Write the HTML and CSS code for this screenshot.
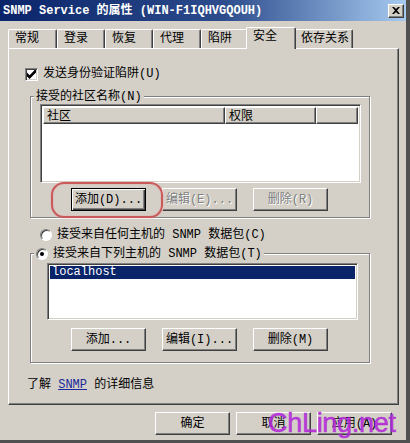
FILE: index.html
```html
<!DOCTYPE html>
<html lang="zh-CN">
<head>
  <meta charset="UTF-8">
  <title>SNMP Service 的属性</title>
  <link rel="stylesheet" href="styles.css">
</head>
<body>

  <div class="window">
    <!-- Title bar -->
    <div class="titlebar">
      <span class="title">SNMP Service 的属性 (WIN-F1IQHVGQOUH)</span>
      <span class="close">
        <svg width="8" height="7" viewBox="0 0 8 7"><path d="M0 0h2l2 2 2-2h2L5 3.5 8 7H6L4 5 2 7H0l3-3.5z" fill="#000"/></svg>
      </span>
    </div>

    <!-- Tabs -->
    <div class="tabs">
      <div class="tab t1">常规</div>
      <div class="tab t2">登录</div>
      <div class="tab t3">恢复</div>
      <div class="tab t4">代理</div>
      <div class="tab t5">陷阱</div>
      <div class="tab active">安全</div>
      <div class="tab t7">依存关系</div>
    </div>

    <div class="panel">
      <div class="check-row">
        <span class="checkbox">
          <svg width="9" height="9" viewBox="0 0 7 7"><path d="M0 2v3l2 2 5-5V-1L2 4z" fill="#000"/></svg>
        </span>
        <span>发送身份验证陷阱(U)</span>
      </div>

      <!-- Accepted community names -->
      <div class="group group-community">
        <span class="legend">接受的社区名称(N)</span>
        <div class="listview">
          <div class="lv-header">
            <span class="col col-name">社区</span>
            <span class="col col-right">权限</span>
            <span class="col col-rest"></span>
          </div>
          <div class="lv-body"></div>
        </div>
        <div class="btn-row">
          <span class="marked">
            <button class="btn default">添加(D)...</button>
          </span>
          <button class="btn" disabled>编辑(E)...</button>
          <button class="btn" disabled>删除(R)</button>
        </div>
      </div>

      <div class="radio-row">
        <span class="radio"></span>
        <span>接受来自任何主机的 SNMP 数据包(C)</span>
      </div>

      <!-- Accepted hosts -->
      <div class="group group-hosts">
        <span class="legend">
          <span class="radio checked"></span>
          <span>接受来自下列主机的 SNMP 数据包(T)</span>
        </span>
        <div class="listbox">
          <div class="lb-item selected">localhost</div>
        </div>
        <div class="btn-row">
          <button class="btn">添加...</button>
          <button class="btn">编辑(I)...</button>
          <button class="btn">删除(M)</button>
        </div>
      </div>

      <p class="info">了解 <a href="#">SNMP</a> 的详细信息</p>
    </div>

    <div class="footer">
      <button class="btn">确定</button>
      <button class="btn">取消</button>
      <button class="btn">应用(A)</button>
    </div>

    <div class="watermark">ChLing.net</div>
  </div>

</body>
</html>
```

FILE: styles.css
```css
body {
  margin: 0;
  background: #d4d0c8;
  font-family: "Liberation Mono", "Noto Sans CJK SC", monospace;
  font-size: 12px;
  line-height: 14px;
  color: #000;
}
.window {
  position: relative;
  width: 410px;
  height: 443px;
  box-sizing: border-box;
  border-right: 4px solid #505050;
  border-bottom: 3px solid #505050;
  overflow: hidden;
}
.titlebar {
  height: 21px;
  display: flex;
  align-items: center;
  justify-content: space-between;
  padding: 0 2px 0 3px;
  background: linear-gradient(to right, #0a246a, #2c4c8c 55%, #a6caf0);
}
.title {
  color: #fff;
  font-weight: bold;
  white-space: nowrap;
}
.close {
  width: 16px;
  height: 14px;
  box-sizing: border-box;
  display: flex;
  align-items: center;
  justify-content: center;
  background: #d4d0c8;
  border: 1px solid;
  border-color: #fff #404040 #404040 #fff;
  box-shadow: inset -1px -1px 0 #808080;
}

/* tabs */
.tabs {
  display: flex;
  align-items: flex-end;
  height: 21px;
  margin: 6px 0 0 8px;
  position: relative;
  z-index: 1;
}
.tab {
  box-sizing: border-box;
  height: 19px;
  padding: 2px 0 0 6px;
  border: 1px solid;
  border-color: #fff #404040 transparent #fff;
  border-bottom: 0;
  border-radius: 2px 2px 0 0;
  box-shadow: inset -1px 0 0 #808080;
  background: #d4d0c8;
}
.t1 { width: 49px; }
.t2, .t3, .t4 { width: 48px; }
.t5 { width: 47px; }
.t7 { width: 59px; }
.tab.active {
  width: 50px;
  height: 22px;
  margin: 0 -2px -1px;
  padding: 2px 0 0 6px;
  position: relative;
}

/* panel */
.panel {
  box-sizing: border-box;
  width: 391px;
  height: 357px;
  margin-left: 8px;
  padding-top: 18px;
  border: 1px solid;
  border-color: #fff #404040 #404040 #fff;
  box-shadow: inset -1px -1px 0 #808080;
}
.check-row, .radio-row {
  display: flex;
  align-items: center;
  gap: 5px;
  height: 14px;
}
.check-row { margin-left: 16px; }
.checkbox {
  width: 13px;
  height: 13px;
  box-sizing: border-box;
  display: flex;
  align-items: center;
  justify-content: center;
  background: #fff;
  border: 1px solid;
  border-color: #808080 #fff #fff #808080;
  box-shadow: inset 1px 1px 0 #404040, inset -1px -1px 0 #d4d0c8;
}
.radio {
  width: 12px;
  height: 12px;
  box-sizing: border-box;
  border-radius: 50%;
  background: #fff;
  border: 1px solid;
  border-color: #808080 #fff #fff #808080;
  box-shadow: inset 1px 1px 0 #404040;
  position: relative;
  flex: none;
}
.radio.checked::after {
  content: "";
  position: absolute;
  left: 3px;
  top: 3px;
  width: 4px;
  height: 4px;
  border-radius: 50%;
  background: #000;
}

/* group boxes */
.group {
  position: relative;
  box-sizing: border-box;
  width: 340px;
  margin-left: 21px;
  border: 1px solid #808080;
  box-shadow: inset 1px 1px 0 #fff, 1px 1px 0 #fff;
}
.legend {
  position: absolute;
  top: -7px;
  left: 3px;
  padding: 0 2px;
  background: #d4d0c8;
  display: flex;
  align-items: center;
  gap: 5px;
  height: 14px;
}
.group-community {
  margin-top: 15px;
  height: 122px;
  padding: 7px 8px 0 9px;
}
.group-hosts {
  margin-top: 11px;
  height: 110px;
  padding: 9px 0 0 16px;
}
.radio-row {
  margin: 10px 0 0 31px;
}

.listview, .listbox {
  box-sizing: border-box;
  background: #fff;
  border: 1px solid;
  border-color: #808080 #fff #fff #808080;
  box-shadow: inset 1px 1px 0 #404040, inset -1px -1px 0 #d4d0c8;
  padding: 2px;
}
.listview { height: 79px; }
.lv-header {
  display: flex;
  height: 17px;
}
.col {
  box-sizing: border-box;
  height: 17px;
  padding: 2px 0 0 3px;
  background: #d4d0c8;
  border: 1px solid;
  border-color: #fff #404040 #404040 #fff;
  box-shadow: inset -1px -1px 0 #808080;
}
.col-name { width: 182px; }
.col-right { width: 91px; }
.col-rest { flex: 1; }

.listbox {
  width: 311px;
  height: 57px;
}
.lb-item {
  height: 13px;
  line-height: 13px;
  padding-left: 2px;
}
.lb-item.selected {
  background: #0a246a;
  color: #fff;
}

/* buttons */
.btn-row {
  display: flex;
  gap: 16px;
  margin-top: 5px;
  padding-left: 31px;
}
.group-hosts .btn-row {
  margin-top: 8px;
  padding-left: 24px;
}
.btn {
  box-sizing: border-box;
  width: 75px;
  height: 23px;
  padding: 0;
  font: inherit;
  color: #000;
  background: #d4d0c8;
  border: 1px solid;
  border-color: #fff #404040 #404040 #fff;
  box-shadow: inset -1px -1px 0 #808080;
}
.btn:disabled {
  color: #808080;
  text-shadow: 1px 1px 0 #fff;
}
.btn.default {
  border: 1px solid #000;
  box-shadow: inset 1px 1px 0 #fff, inset -1px -1px 0 #404040, inset -2px -2px 0 #808080;
}
.marked {
  position: relative;
  display: flex;
}
.marked::after {
  content: "";
  position: absolute;
  left: -20px;
  right: -17px;
  top: -6px;
  bottom: -7px;
  border: 2px solid #c85a5a;
  border-radius: 13px;
  box-shadow: 0 0 2px #e8a8a8, inset 0 0 2px #e8a8a8;
}

.info {
  margin: 15px 0 0 18px;
}
.info a {
  color: #1a2a9a;
}

.footer {
  display: flex;
  gap: 6px;
  padding: 7px 0 0 155px;
}

.watermark {
  position: absolute;
  left: 268px;
  top: 410px;
  font-family: "Liberation Sans", sans-serif;
  font-size: 27px;
  line-height: 27px;
  letter-spacing: -0.3px;
  color: rgba(178, 40, 215, 0.88);
  -webkit-text-stroke: 0.6px rgba(178, 40, 215, 0.88);
  white-space: nowrap;
}
```
